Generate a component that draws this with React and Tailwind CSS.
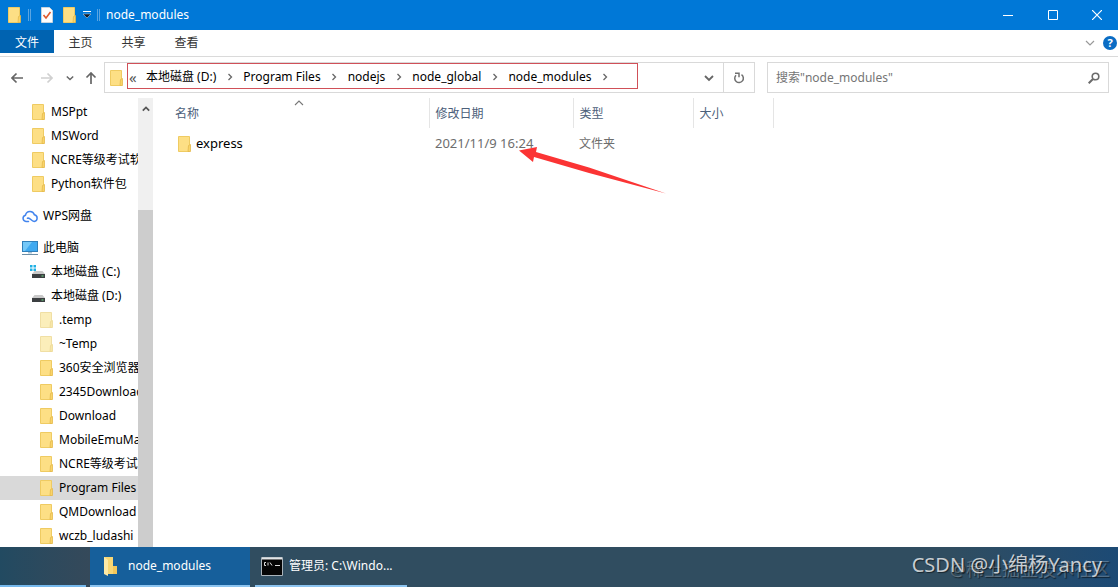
import { useState } from "react";

const sidebarItems = [
  { name: "MSPpt", icon: "folder", level: 2 },
  { name: "MSWord", icon: "folder", level: 2 },
  { name: "NCRE等级考试软件", icon: "folder", level: 2 },
  { name: "Python软件包", icon: "folder", level: 2 },
  { name: "WPS网盘", icon: "cloud", level: 1 },
  { name: "此电脑", icon: "pc", level: 1 },
  { name: "本地磁盘 (C:)", icon: "system", level: 2 },
  { name: "本地磁盘 (D:)", icon: "drive", level: 2 },
  { name: ".temp", icon: "pale", level: 3 },
  { name: "~Temp", icon: "pale", level: 3 },
  { name: "360安全浏览器下载", icon: "folder", level: 3 },
  { name: "2345Downloads", icon: "folder", level: 3 },
  { name: "Download", icon: "folder", level: 3 },
  { name: "MobileEmuMaster", icon: "folder", level: 3 },
  { name: "NCRE等级考试", icon: "folder", level: 3 },
  { name: "Program Files", icon: "folder", level: 3 },
  { name: "QMDownload", icon: "folder", level: 3 },
  { name: "wczb_ludashi", icon: "folder", level: 3 },
];

const crumbs = ["本地磁盘 (D:)", "Program Files", "nodejs", "node_global", "node_modules"];

const files = [{ name: "express", date: "2021/11/9 16:24", type: "文件夹", size: "" }];

function Folder({ pale }) {
  return (
    <svg width="16" height="18" viewBox="0 0 16 18" className="shrink-0">
      <path d="M2.500 1.500h11v15h-11z" fill={pale ? "#fbeeba" : "#fddf85"} stroke={pale ? "#f0dfa4" : "#efcb62"} />
      <path d="M12.500 10.500l2-1v7h-2.500z" fill={pale ? "#f7e6a8" : "#f9d468"} stroke={pale ? "#ecd997" : "#e4b94c"} strokeWidth=".8" />
    </svg>
  );
}

function Cloud() {
  return (
    <svg width="16" height="16" viewBox="0 0 16 16" fill="none" stroke="#4385ee" strokeWidth="1.500" strokeLinecap="round" className="shrink-0">
      <path d="M6.500 13.500H4a3.200 3.200 0 0 1-.5-6.300A4.600 4.600 0 0 1 12.400 6.800a3.400 3.400 0 0 1-.2 6.700c-3.200 0-4-4.500-6.800-3.200" />
    </svg>
  );
}

function Computer() {
  return (
    <svg width="16" height="16" viewBox="0 0 16 16" className="shrink-0">
      <rect x=".5" y="1.500" width="15" height="10" fill="#3fa9f0" stroke="#2f7fba" />
      <path d="M1 2h9L3 11H1z" fill="#74c8f8" />
      <path d="M6 12h4v1.500H6z" fill="#a9c3d6" />
      <path d="M0 14.500h16" stroke="#6d8ea6" />
    </svg>
  );
}

function Drive({ system }) {
  return (
    <svg width="16" height="16" viewBox="0 0 16 16" className="shrink-0">
      <path d="M4.500 7h8L15 10H2z" fill="#c9c9c9" />
      <path d="M2 10h13v4H2z" fill="#3c3f41" />
      <path d="M11.500 12h2" stroke="#6fe08a" />
      {system && <path d="M0 1h2.500v2.500H0zM3.500 1H6v2.500H3.500zM0 4.500h2.500V7H0zM3.500 4.500H6V7H3.500z" fill="#1fb0e4" />}
    </svg>
  );
}

function ItemIcon({ icon }) {
  if (icon === "cloud") return <Cloud />;
  if (icon === "pc") return <Computer />;
  if (icon === "system") return <Drive system />;
  if (icon === "drive") return <Drive />;
  return <Folder pale={icon === "pale"} />;
}

function Chevron({ direction, className = "", size = 10, width = 1.5 }) {
  const paths = {
    right: "M3.500 2L6.500 5L3.500 8",
    down: "M1 3L5 7L9 3",
    up: "M1 7L5 3L9 7",
  };
  return (
    <svg width={size} height={size} viewBox="0 0 10 10" fill="none" stroke="currentColor" strokeWidth={width} className={`shrink-0 ${className}`}>
      <path d={paths[direction]} />
    </svg>
  );
}

function TitleBar() {
  return (
    <header className="flex h-[30px] shrink-0 items-center bg-[#0078d7] text-white">
      <div className="flex items-center pl-1.5">
        <Folder />
        <span className="ml-1.5 h-3 w-[3px] border-x border-[#5aa5e2]" />
        <button aria-label="属性" className="ml-2.5">
          <svg width="12" height="16" viewBox="0 0 12 16">
            <path d="M.5.5h8l3 3v12H.5z" fill="#fdfdfd" stroke="#c8d4de" />
            <path d="M2.500 8l2.500 3 4.500-6" fill="none" stroke="#e0582a" strokeWidth="1.600" />
          </svg>
        </button>
        <button aria-label="新建文件夹" className="ml-2">
          <Folder />
        </button>
        <button aria-label="自定义快速访问工具栏" className="ml-1.5">
          <svg width="8" height="8" viewBox="0 0 8 8">
            <path d="M0 .5h8" stroke="#fff" />
            <path d="M0 3h8L4 7z" fill="#0b1a2b" stroke="#fff" strokeWidth=".4" />
          </svg>
        </button>
        <span className="ml-1.5 h-3 w-[3px] border-x border-[#5aa5e2]" />
      </div>
      <h1 className="ml-1.5 flex-1 text-xs">node_modules</h1>
      <button aria-label="最小化" className="flex h-full w-[45px] items-center justify-center">
        <svg width="10" height="10" stroke="#fff"><path d="M0 5.500h10" /></svg>
      </button>
      <button aria-label="最大化" className="flex h-full w-[46px] items-center justify-center">
        <svg width="10" height="10" fill="none" stroke="#fff"><path d="M.5.500h9v9h-9z" /></svg>
      </button>
      <button aria-label="关闭" className="flex h-full w-[42px] items-center justify-center">
        <svg width="10" height="10" stroke="#fff" strokeWidth="1.200"><path d="M0 0l10 10M10 0L0 10" /></svg>
      </button>
    </header>
  );
}

function MenuBar() {
  return (
    <nav className="flex h-[27px] shrink-0 items-stretch border-b border-[#dadada] text-xs text-[#333]">
      <button className="mb-[3px] w-[54px] bg-[#0063b1] pt-0.5 text-white">文件</button>
      <button className="w-[53px]">主页</button>
      <button className="w-[53px]">共享</button>
      <button className="w-[53px]">查看</button>
      <div className="ml-auto flex items-center gap-2 pr-px">
        <button aria-label="展开功能区" className="text-[#999]">
          <Chevron direction="down" width={1.2} />
        </button>
        <button aria-label="帮助" className="flex size-[14px] items-center justify-center rounded-full bg-[#0a6cc4] text-[11px] font-bold text-white">
          ?
        </button>
      </div>
    </nav>
  );
}

function NavArrow({ up, left, label, className }) {
  return (
    <button aria-label={label} className={className}>
      <svg width="12" height="12" viewBox="0 0 12 12" fill="none" stroke="currentColor" strokeWidth="1.700">
        {up && <path d="M6 12V1M1.500 5.500L6 1l4.500 4.500" />}
        {!up && left && <path d="M12 6H1M5.500 1.500L1 6l4.500 4.500" />}
        {!up && !left && <path d="M0 6h11M6.500 1.500L11 6l-4.500 4.500" />}
      </svg>
    </button>
  );
}

function AddressRow() {
  const [query, setQuery] = useState("");

  return (
    <div className="flex h-[41px] shrink-0 items-center pr-[9px]">
      <div className="flex w-[104px] items-center pl-[11px] text-[#666]">
        <NavArrow left label="后退" />
        <NavArrow label="前进" className="ml-[18px] text-[#d0d0d0]" />
        <button aria-label="最近浏览的位置" className="ml-[13px]">
          <Chevron direction="down" size={8} width={1.8} />
        </button>
        <NavArrow up label="向上" className="ml-[11px]" />
      </div>
      <div className="flex h-[31px] min-w-0 flex-1 border border-[#d9d9d9]">
        <div className="flex w-[22px] shrink-0 items-center justify-center">
          <Folder />
        </div>
        <nav aria-label="路径" className="flex h-[26px] w-[511px] items-center border border-[#d05058] pt-0.5 text-xs text-black">
          <span className="w-[18px] pl-px text-[15px] leading-4 text-[#555]">«</span>
          {crumbs.map((crumb) => (
            <span key={crumb} className="flex items-center whitespace-nowrap">
              <button>{crumb}</button>
              <span className="flex w-[27px] justify-center text-[#666]">
                <Chevron direction="right" width={1.3} />
              </span>
            </span>
          ))}
        </nav>
        <button aria-label="上一个位置" className="ml-auto flex w-7 items-center justify-center text-[#666]">
          <Chevron direction="down" width={1.8} />
        </button>
        <button aria-label="刷新" className="flex w-[31px] items-center justify-center border-l border-[#d9d9d9]">
          <svg width="12" height="12" viewBox="0 0 12 12" fill="none" stroke="#707070" strokeWidth="1.500">
            <path d="M8.500 2.700A4.300 4.300 0 1 1 3 3.200M2 1.200h4v4" />
          </svg>
        </button>
      </div>
      <label className="ml-3 flex h-[31px] w-[342px] items-center border border-[#d9d9d9] px-2">
        <input
          type="search"
          aria-label="搜索"
          value={query}
          onChange={(e) => setQuery(e.target.value)}
          placeholder={'搜索"node_modules"'}
          className="min-w-0 flex-1 text-xs outline-none placeholder:text-[#757575]"
        />
        <svg width="12" height="12" viewBox="0 0 12 12" fill="none" stroke="#6b6b6b" strokeWidth="1.600">
          <circle cx="7.500" cy="4.500" r="3.300" />
          <path d="M5 7L.7 11.300" strokeWidth="2" />
        </svg>
      </label>
    </div>
  );
}

const indents = { 1: "pl-[22px]", 2: "pl-[30px]", 3: "pl-[38px]" };

function Sidebar({ selected, onSelect }) {
  return (
    <aside className="flex w-[153px] shrink-0 overflow-hidden">
      <ul className="w-[138px] overflow-hidden pt-0.5">
        {sidebarItems.map((item) => (
          <li key={item.name + item.level} className={item.level === 1 ? "mt-2 h-6" : "h-6"}>
            <button
              onClick={() => onSelect(item.name)}
              className={`flex h-6 w-full items-center gap-[5px] overflow-hidden whitespace-nowrap text-xs text-black ${indents[item.level]} ${selected === item.name ? "bg-[#d9d9d9]" : ""}`}
            >
              <ItemIcon icon={item.icon} />
              <span>{item.name}</span>
            </button>
          </li>
        ))}
      </ul>
      <div className="flex w-[15px] flex-col bg-[#f0f0f0]">
        <button aria-label="向上滚动" className="flex h-[22px] items-center justify-center text-[#555]">
          <Chevron direction="up" size={8} width={2.2} />
        </button>
        <div className="mt-[90px] flex-1 bg-[#cdcdcd]" />
      </div>
    </aside>
  );
}

function FileList() {
  return (
    <main className="relative min-w-0 flex-1 overflow-hidden">
      <table className="w-[620px] table-fixed border-collapse text-left">
        <colgroup>
          <col className="w-[276px]" />
          <col className="w-36" />
          <col className="w-[120px]" />
          <col className="w-20" />
        </colgroup>
        <thead>
          <tr className="h-[30px] text-xs text-[#4c607a]">
            <th className="relative border-r border-[#e5e5e5] pl-[22px] pt-0.5 font-normal">
              名称
              <Chevron direction="up" width={1.1} className="absolute left-[141px] top-0 text-[#777]" />
            </th>
            <th className="border-r border-[#e5e5e5] pl-1.5 pt-0.5 font-normal">修改日期</th>
            <th className="border-r border-[#e5e5e5] pl-1.5 pt-0.5 font-normal">类型</th>
            <th className="border-r border-[#e5e5e5] pl-1.5 pt-0.5 font-normal">大小</th>
          </tr>
        </thead>
        <tbody>
          {files.map((file) => (
            <tr key={file.name} className="h-8 text-xs text-[#6d6d6d]">
              <td className="pl-[23px] text-[13px] text-black">
                <div className="flex items-center gap-1">
                  <Folder />
                  {file.name}
                </div>
              </td>
              <td className="pl-1.5 text-[13px]">{file.date}</td>
              <td className="pl-1.5">{file.type}</td>
              <td className="pl-1.5">{file.size}</td>
            </tr>
          ))}
        </tbody>
      </table>
      {/* arrow pointing at the modified date */}
      <svg width="148" height="48" viewBox="0 0 148 48" className="absolute left-[366px] top-12">
        <path d="M0 4.500L18 1L17 6L70 21.500L147 47.500L70 27L15 11L14 16z" fill="#fb3434" />
      </svg>
    </main>
  );
}

function TaskBar() {
  return (
    <footer className="relative flex h-10 shrink-0 bg-linear-to-r from-[#304d60] from-85% to-[#1c4a75] text-white">
      <div className="w-[90px] bg-linear-to-r from-[#224a61] to-[#35495a]">
        <div className="mt-[38px] h-0.5 w-[86px] bg-[#76b9ed]" />
      </div>
      <button className="flex w-40 items-center border-b-2 border-[#8cc4f0] bg-[#165f9b] pl-3 text-xs">
        <svg width="18" height="20" viewBox="0 0 18 20">
          <path d="M2 1h9v17H2z" fill="#f8d775" />
          <path d="M11 10h4v8h-4z" fill="#f3c75a" />
          <path d="M2 1l4 3v16l-4-2z" fill="#fde9a6" />
        </svg>
        <span className="ml-2">node_modules</span>
      </button>
      <button className="ml-[5px] flex w-[152px] items-center border-b-2 border-[#8cc4f0] pl-1.5 text-xs">
        <svg width="22" height="19" viewBox="0 0 22 19">
          <path d="M.5.500h21v18H.5z" fill="#050505" stroke="#a9b3ba" />
          <path d="M1 1.500h20" stroke="#e2e5e7" strokeWidth="2" />
          <path d="M5 5.500H3.500v3H5M7 5.500v3M9 5.500l2 3M14 8.500h5" fill="none" stroke="#ddd" />
        </svg>
        <span className="ml-1.5 whitespace-nowrap">管理员: C:\Windo...</span>
      </button>
      <span className="absolute right-2 top-2 text-lg text-white/25 [text-shadow:1px_1px_1px_#0008]">@稀土掘金技术社区</span>
      <span className="absolute right-4 top-1 text-xl text-white/75 [text-shadow:1px_1px_1px_#0008]">CSDN @小绵杨Yancy</span>
    </footer>
  );
}

export default function App() {
  const [selected, setSelected] = useState("Program Files");

  return (
    <div className="flex h-screen flex-col overflow-hidden bg-white font-['Noto_Sans','Noto_Sans_CJK_SC',sans-serif]">
      <TitleBar />
      <MenuBar />
      <AddressRow />
      <div className="flex min-h-0 flex-1">
        <Sidebar selected={selected} onSelect={setSelected} />
        <FileList />
      </div>
      <TaskBar />
    </div>
  );
}
